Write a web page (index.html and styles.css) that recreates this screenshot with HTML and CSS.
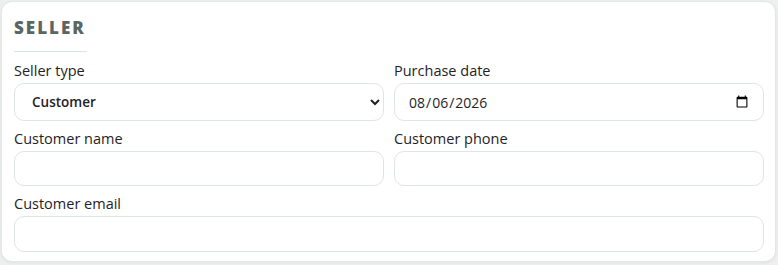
FILE: index.html
```html
<!DOCTYPE html>
<html lang="en">
<head>
    <meta charset="UTF-8">
    <meta name="viewport" content="width=device-width, initial-scale=1.0">
    <title>Seller</title>
    <link rel="stylesheet" href="styles.css">
</head>
<body>
    <div class="card">
        <h2 class="section-title">Seller</h2>
        <div class="form-grid">
            <div class="field">
                <label for="sellerType">Seller type</label>
                <select id="sellerType" class="control select-control">
                    <option>Customer</option>
                    <option>Dealer</option>
                </select>
            </div>
            <div class="field">
                <label for="purchaseDate">Purchase date</label>
                <input type="date" id="purchaseDate" class="control date-control" value="2026-08-06">
            </div>
            <div class="field">
                <label for="customerName">Customer name</label>
                <input type="text" id="customerName" class="control">
            </div>
            <div class="field">
                <label for="customerPhone">Customer phone</label>
                <input type="text" id="customerPhone" class="control">
            </div>
            <div class="field full">
                <label for="customerEmail">Customer email</label>
                <input type="email" id="customerEmail" class="control email-control">
            </div>
        </div>
    </div>
</body>
</html>
```

FILE: styles.css
```css
body {
    margin: 0;
    padding: 1px 2px 3px 1px;
    background-color: #eef0f0;
    font-family: "Open Sans", "Noto Sans", Arial, sans-serif;
    color: #2b2f33;
}

.card {
    background-color: #fff;
    border: 1px solid #e3e7e7;
    border-radius: 11px;
    box-shadow: 0 1px 3px rgba(0, 0, 0, 0.06);
    padding: 14px 11px 9px 12px;
}

.section-title {
    display: inline-block;
    margin: 0 0 9px 0;
    padding: 0 1px 11px 0;
    border-bottom: 1px solid #dde3e3;
    font-size: 17px;
    font-weight: 800;
    letter-spacing: 2px;
    text-transform: uppercase;
    color: #5a6662;
    line-height: 24px;
}

.form-grid {
    display: grid;
    grid-template-columns: 1fr 1fr;
    column-gap: 10px;
    row-gap: 8px;
}

.field {
    display: flex;
    flex-direction: column;
}

.field.full {
    grid-column: 1 / 3;
}

.field label {
    font-size: 14.5px;
    font-weight: 500;
    line-height: 19px;
    margin-bottom: 3px;
    color: #1f2327;
}

.control {
    box-sizing: border-box;
    height: 35px;
    border: 1px solid #dfe4e4;
    border-radius: 10px;
    background-color: #fff;
    font-family: inherit;
    font-size: 14px;
    color: #1f2328;
    padding: 0 12px;
    outline: none;
}

.select-control {
    height: 38px;
    padding-left: 13px;
    font-size: 13.5px;
    font-weight: 600;
}

.date-control {
    height: 38px;
    padding-left: 13px;
}

.email-control {
    height: 36px;
}
```
